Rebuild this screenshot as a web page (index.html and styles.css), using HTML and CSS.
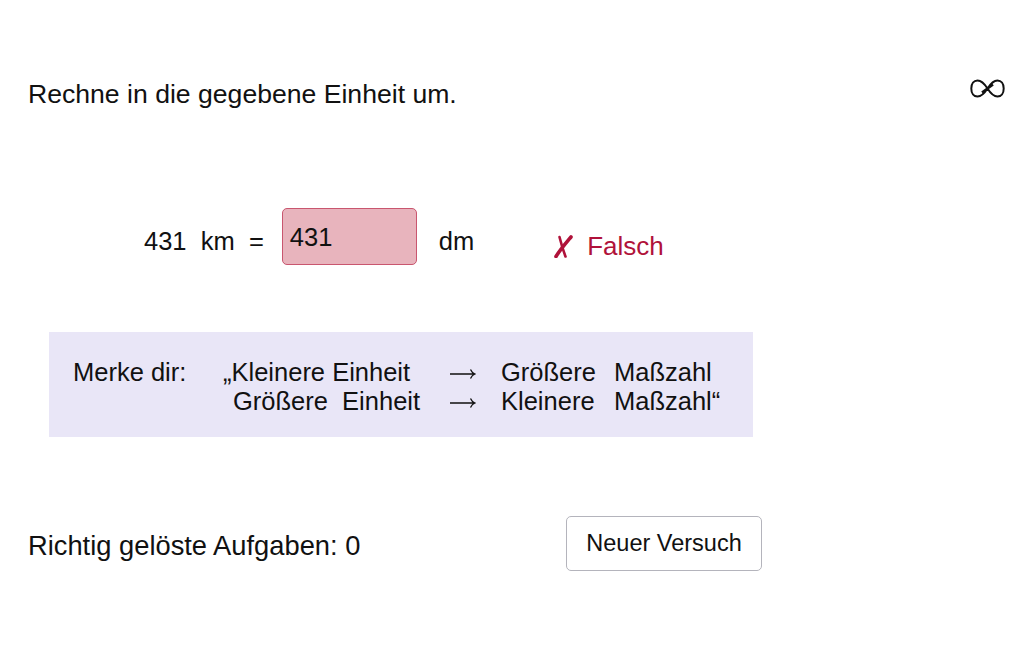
FILE: index.html
```html
<!DOCTYPE html>
<html lang="de">
<head>
<meta charset="utf-8">
<title>Einheiten umrechnen</title>
<link rel="stylesheet" href="styles.css">
</head>
<body>
<div class="page">
  <header class="header">
    <p class="task">Rechne in die gegebene Einheit um.</p>
    <svg class="infinity" width="35" height="19" viewBox="0 0 35 19" aria-label="unendlich">
      <path d="M17.5 9.5 C14 4, 10.5 1.5, 7.5 1.5 C3.8 1.5, 1.3 4.5, 1.3 9.5 C1.3 14.5, 3.8 17.5, 7.5 17.5 C10.5 17.5, 14 15, 17.5 9.5 C21 4, 24.5 1.5, 27.5 1.5 C31.2 1.5, 33.7 4.5, 33.7 9.5 C33.7 14.5, 31.2 17.5, 27.5 17.5 C24.5 17.5, 21 15, 17.5 9.5 Z" fill="none" stroke="#111" stroke-width="2"/>
      <path d="M12 13.5 L23 5.5" stroke="#111" stroke-width="2.6" fill="none"/>
    </svg>
  </header>

  <section class="exercise">
    <span class="given">431&nbsp; km&nbsp; =</span>
    <div class="answer">431</div>
    <span class="unit">dm</span>
    <span class="feedback">
      <svg class="cross" width="19" height="23" viewBox="0 0 19 23" aria-hidden="true">
        <path d="M5.5 2 C7 8, 9 15, 11.5 21.5" stroke="#b0123a" stroke-width="2.6" stroke-linecap="round" fill="none"/>
        <path d="M17 2 C12 8, 6 15, 2 21.5" stroke="#b0123a" stroke-width="3.6" stroke-linecap="round" fill="none"/>
      </svg>
      <span class="feedback-text">Falsch</span>
    </span>
  </section>

  <section class="hint">
    <span class="hint-label">Merke dir:</span>
    <div class="rule">
      <span class="c1">„Kleinere Einheit</span>
      <svg class="arrow" width="26" height="12" viewBox="0 0 26 12" aria-hidden="true"><path d="M0 6 H24.5 M20.5 1.5 Q22 5, 25 6 Q22 7, 20.5 10.5" stroke="#111" stroke-width="1.3" fill="none"/></svg>
      <span class="c3">Größere</span>
      <span class="c4">Maßzahl</span>
      <span class="c1 indent">Größere&nbsp; Einheit</span>
      <svg class="arrow" width="26" height="12" viewBox="0 0 26 12" aria-hidden="true"><path d="M0 6 H24.5 M20.5 1.5 Q22 5, 25 6 Q22 7, 20.5 10.5" stroke="#111" stroke-width="1.3" fill="none"/></svg>
      <span class="c3">Kleinere</span>
      <span class="c4">Maßzahl“</span>
    </div>
  </section>

  <footer class="footer">
    <span class="score">Richtig gelöste Aufgaben: 0</span>
    <button class="retry" type="button">Neuer Versuch</button>
  </footer>
</div>
</body>
</html>
```

FILE: styles.css
```css
* { box-sizing: border-box; }

html, body {
  margin: 0;
  padding: 0;
  background: #ffffff;
}

body {
  font-family: "Liberation Sans", Arial, sans-serif;
  color: #111111;
}

.page {
  padding: 0 27px 0 28px;
}

.header {
  display: flex;
  justify-content: space-between;
  align-items: center;
  margin-top: 78px;
  height: 32px;
}

.task {
  margin: 0;
  font-size: 26.6px;
  line-height: 32px;
}

.infinity {
  display: block;
  margin-top: -11px;
}

.exercise {
  display: flex;
  align-items: center;
  margin-top: 98px;
  margin-left: 116px;
  height: 57px;
  font-size: 25.5px;
}

.given,
.unit {
  white-space: nowrap;
  padding-top: 9px;
}

.answer {
  width: 135px;
  height: 57px;
  margin-left: 18px;
  background: #e8b4bd;
  border: 1px solid #c9566f;
  border-radius: 5px;
  padding: 14px 0 0 7px;
  font-size: 25.5px;
  line-height: 28px;
}

.unit {
  margin-left: 22px;
}

.feedback {
  display: flex;
  align-items: center;
  margin-left: 80px;
  padding-top: 20px;
  color: #b0123a;
  font-size: 26px;
}

.cross {
  display: block;
  margin-right: 14px;
}

.hint {
  display: flex;
  align-items: flex-start;
  margin-top: 67px;
  margin-left: 21px;
  width: 704px;
  height: 105px;
  background: #e9e6f7;
  padding: 26px 0 0 24px;
  font-size: 25.5px;
  line-height: 29px;
}

.hint-label {
  width: 150px;
  white-space: nowrap;
}

.rule {
  display: grid;
  grid-template-columns: 227px 51px 113px auto;
  align-items: center;
  white-space: nowrap;
}

.indent {
  padding-left: 10px;
}

.arrow {
  display: block;
  margin-top: 2px;
}

.footer {
  display: flex;
  align-items: center;
  margin-top: 79px;
  height: 55px;
}

.score {
  width: 538px;
  font-size: 27.3px;
  padding-top: 4px;
}

.retry {
  width: 196px;
  height: 55px;
  background: #ffffff;
  border: 1px solid #b4b4bc;
  border-radius: 5px;
  font-family: "Liberation Sans", Arial, sans-serif;
  font-size: 23.5px;
  color: #111111;
  padding: 0;
}
```
